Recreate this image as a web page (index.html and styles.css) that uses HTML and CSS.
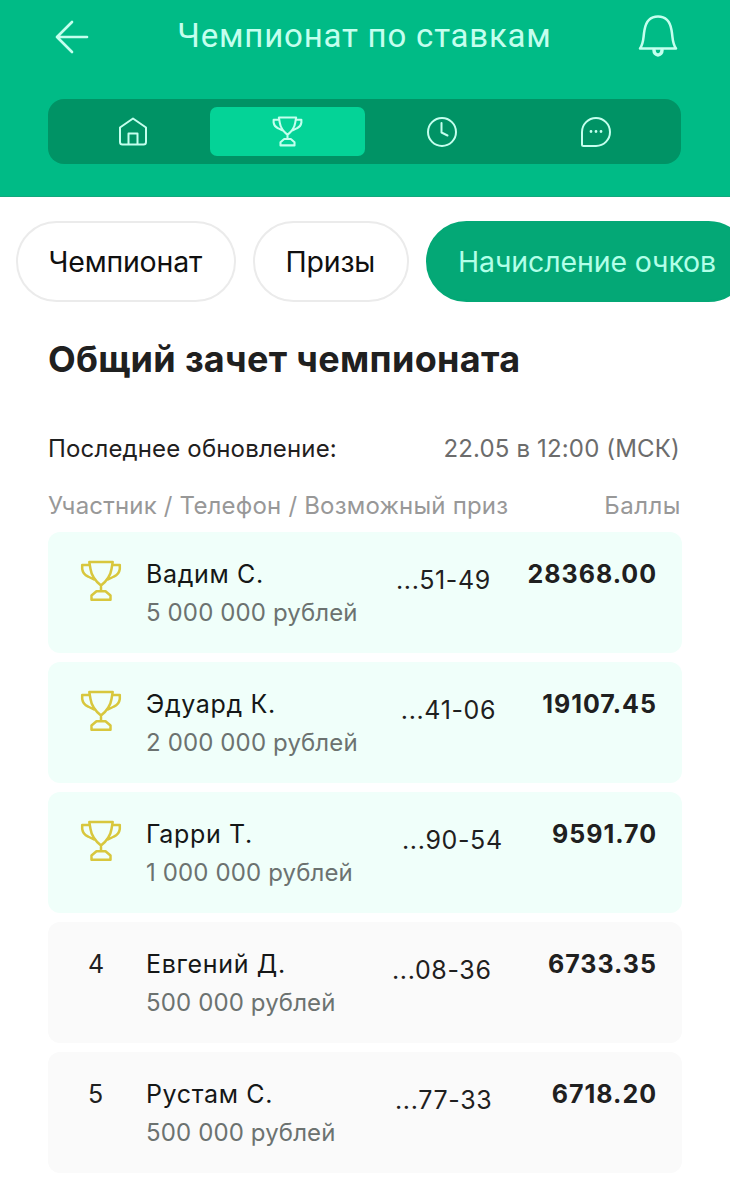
FILE: index.html
```html
<!DOCTYPE html>
<html lang="ru">
<head>
<meta charset="utf-8">
<title>Чемпионат по ставкам</title>
<link rel="stylesheet" href="styles.css">
</head>
<body>
<svg class="sprite" width="0" height="0">
  <symbol id="cup" viewBox="0 0 42 42">
    <path d="M9.300 2H32.700L31.500 9C30.500 16 26 21.500 21 25.500C16 21.500 11.500 16 10.500 9ZM9.500 5H2.200V9Q3 14.500 8 16.500L14 19.500M32.500 5H39.800V9Q39 14.500 34 16.500L28 19.500M21 25.500V31M11.500 39.800V35.500L16.500 31.200H25.500L30.500 35.500V39.800Z"/>
  </symbol>
</svg>
<header class="top">
  <div class="bar">
    <svg class="back" viewBox="0 0 34 34"><path d="M32 17H2M17 2L2 17L17 32"/></svg>
    <h1 class="title">Чемпионат по ставкам</h1>
    <svg class="bell" viewBox="0 0 40 44"><path d="M2 34.500C6 29 5 24 6.500 16C8 7 12 2.500 20 2.500S32 7 33.500 16C35 24 34 29 38 34.500Z"/><path class="clapper" d="M16 36C16 42.500 24 42.500 24 36"/></svg>
  </div>
  <nav class="tabs">
    <a class="tab"><svg class="icon" viewBox="0 0 32 32"><path d="M3 11.500L16 2.500L29 11.500V26Q29 28.500 26.500 28.500H5.500Q3 28.500 3 26ZM11.500 28.500V17.500H20.500V28.500"/></svg></a>
    <a class="tab active"><svg class="icon cup-tab"><use href="#cup"/></svg></a>
    <a class="tab"><svg class="icon" viewBox="0 0 32 32"><circle cx="16" cy="16" r="14"/><path d="M15.500 7V16.500L21.500 19.500"/></svg></a>
    <a class="tab"><svg class="icon" viewBox="0 0 32 32"><path d="M2 16A14 14 0 1 1 16 30H3.500Q2 30 2 28.500Z"/><path class="dots" d="M11 15.500H11.010M16 15.500H16.010M21 15.500H21.010"/></svg></a>
  </nav>
</header>
<div class="pills">
  <a class="pill p1">Чемпионат</a>
  <a class="pill p2">Призы</a>
  <a class="pill p3 selected">Начисление очков</a>
</div>
<main class="content">
  <h2 class="heading">Общий зачет чемпионата</h2>
  <div class="updated"><span>Последнее обновление:</span><span class="date">22.05 в 12:00 (МСК)</span></div>
  <div class="columns"><span>Участник / Телефон / Возможный приз</span><span class="points-label">Баллы</span></div>
  <div class="list">
    <div class="row prize"><svg class="cup"><use href="#cup"/></svg><div class="who"><div class="name">Вадим С.</div><div class="sum">5 000 000 рублей</div></div><div class="phone">...51-49</div><div class="score">28368.00</div></div>
    <div class="row prize second"><svg class="cup"><use href="#cup"/></svg><div class="who"><div class="name">Эдуард К.</div><div class="sum">2 000 000 рублей</div></div><div class="phone">...41-06</div><div class="score">19107.45</div></div>
    <div class="row prize third"><svg class="cup"><use href="#cup"/></svg><div class="who"><div class="name">Гарри Т.</div><div class="sum">1 000 000 рублей</div></div><div class="phone">...90-54</div><div class="score">9591.70</div></div>
    <div class="row fourth"><div class="place">4</div><div class="who"><div class="name">Евгений Д.</div><div class="sum">500 000 рублей</div></div><div class="phone">...08-36</div><div class="score">6733.35</div></div>
    <div class="row"><div class="place">5</div><div class="who"><div class="name">Рустам С.</div><div class="sum">500 000 рублей</div></div><div class="phone">...77-33</div><div class="score">6718.20</div></div>
  </div>
</main>
</body>
</html>
```
FILE: styles.css
```css
* { box-sizing: border-box; }
body { margin: 0; background: #fff; color: #1f2020; font-family: Inter, sans-serif; overflow: hidden; height: 1177px; }
svg { fill: none; stroke: currentColor; stroke-linejoin: round; stroke-linecap: round; flex: none; }
.sprite { display: none; }
.top { height: 197px; background: #00bb86; color: #c4ffee; padding: 0 48px; border-bottom: 1px solid #12a77d; }
.bar { height: 99px; display: flex; justify-content: space-between; padding: 0 4px 0 7px; }
.back { width: 34px; height: 34px; margin-top: 20px; stroke-width: 2.700; }
.title { margin: 16px 0 0 2px; font: 400 33px/40px Roboto, sans-serif; letter-spacing: 0.800px; white-space: nowrap; }
.bell { width: 40px; height: 44px; margin-top: 14px; stroke-width: 2.500; }
.clapper { stroke-width: 3.500; }
.tabs { height: 65px; width: 633px; padding: 8px; display: grid; grid-template-columns: repeat(4, 1fr); background: #009365; border-radius: 16px; }
.tab { display: flex; align-items: center; justify-content: center; border-radius: 7px; }
.active { background: #04d397; }
.icon { width: 32px; height: 32px; stroke-width: 2; }
.cup-tab { width: 31px; height: 31px; stroke-width: 2.800; }
.dots { stroke-width: 2.800; }
.pills { display: flex; gap: 17px; margin: 24px 0 0 16px; }
.pill { flex: none; height: 81px; border: 2px solid #ebebeb; border-radius: 41px; padding: 0 30.500px; font-size: 28.500px; line-height: 77px; letter-spacing: -0.200px; color: #101010; white-space: nowrap; }
.p1 { width: 220px; }
.p2 { width: 156px; }
.p3 { width: 323px; padding-left: 30px; letter-spacing: -0.120px; }
.selected { background: #04a876; border-color: #04a876; color: #b2ffe8; }
.content { padding: 0 48px; }
.heading { margin: 35px 0 0; font-size: 36px; line-height: 44px; font-weight: 700; letter-spacing: 0.310px; white-space: nowrap; }
.updated, .columns { display: flex; justify-content: space-between; white-space: nowrap; width: 633px; font-size: 24px; line-height: 30px; letter-spacing: 0.160px; }
.updated { margin-top: 53px; }
.date { color: #6c6c6c; margin-right: 1px; }
.columns { margin-top: 27px; color: #989898; letter-spacing: 0.190px; }
.points-label { letter-spacing: 0.500px; }
.list { display: grid; gap: 9px; margin-top: 11px; width: 634px; }
.row { height: 121px; display: grid; grid-template-columns: 66px 251px 1fr 136px; padding: 22px 25px 0 32px; background: #fafafa; border-radius: 12px; white-space: nowrap; font-size: 25px; line-height: 40px; letter-spacing: 0.650px; }
.prize { background: #f0fffa; }
.cup { width: 42px; height: 42px; margin-top: 6px; color: #d8c73d; stroke-width: 2.500; }
.place { padding-left: 8px; }
.name { line-height: 40px; color: #151717; }
.sum { font-size: 24px; line-height: 38px; letter-spacing: 0.130px; color: #6c7270; }
.phone { width: 97px; margin-top: 6px; margin-left: -2px; text-align: center; }
.second .phone { margin-left: 3px; }
.third .phone { margin-left: 5px; }
.fourth .phone { margin-left: -5px; }
.score { font-weight: 700; text-align: right; letter-spacing: 1px; }
```
